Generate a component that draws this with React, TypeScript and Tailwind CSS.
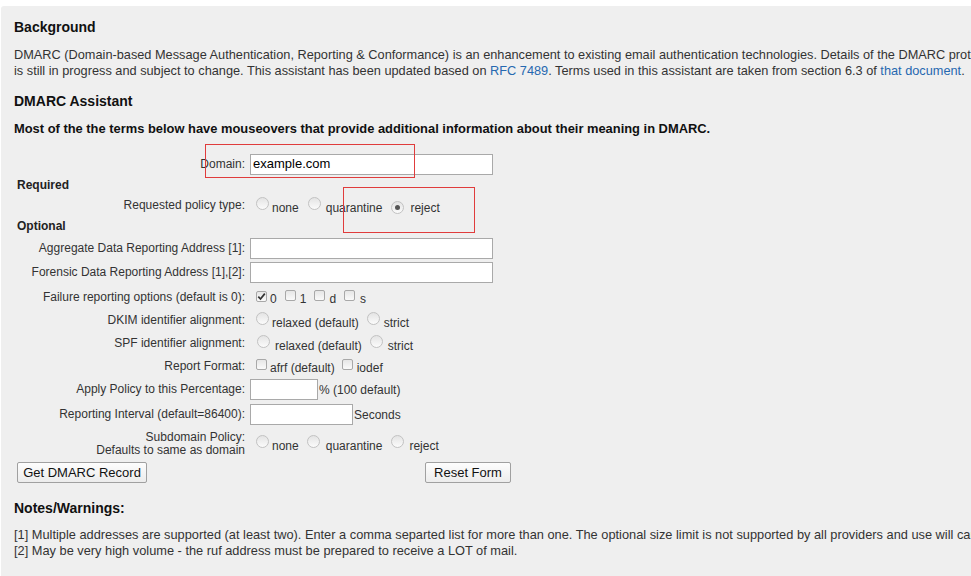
import React from 'react';

const Radio = ({ checked = false }: { checked?: boolean }) => (
  <span className="inline-flex h-[13px] w-[13px] shrink-0 items-center justify-center rounded-full border border-[#c2c2c2] bg-gradient-to-b from-[#e4e4e4] to-[#fbfbfb]">
    {checked && <span className="h-[5px] w-[5px] rounded-full bg-[#555]" />}
  </span>
);

const Check = ({ checked = false }: { checked?: boolean }) => (
  <span className="inline-flex h-[11px] w-[11px] shrink-0 items-center justify-center rounded-[2px] border border-[#a8a8a8] bg-gradient-to-b from-[#e6e6e6] to-[#fafafa]">
    {checked && (
      <svg width="9" height="9" viewBox="0 0 9 9">
        <path d="M1.3 4.6 L3.5 7 L7.8 1.6" fill="none" stroke="#333" strokeWidth="1.7" />
      </svg>
    )}
  </span>
);

const Row = ({ label, h, children }: { label: React.ReactNode; h: string; children?: React.ReactNode }) => (
  <div className={`flex items-center ${h}`}>
    <div className="w-[231px] shrink-0 text-right text-[12px] leading-[13px] text-[#333]">{label}</div>
    <div className="ml-[5px] flex items-center text-[12px] text-[#333]">{children}</div>
  </div>
);

const Opt = ({ children, cls }: { children: React.ReactNode; cls: string }) => (
  <span className={`translate-y-[2px] ${cls}`}>{children}</span>
);

export default function App() {
  return (
    <div className="h-[576px] w-[971px] overflow-hidden bg-white pl-[1px] pt-[6px] font-['Liberation_Sans',Arial,sans-serif]">
      <div className="relative h-full w-[1100px] rounded-tl-[3px] bg-[#efefef] pl-[13px] pt-[12px]">
        <h2 className="text-[14px] font-bold leading-[18px] text-[#111]">Background</h2>
        <div className="mt-[11px] whitespace-nowrap text-[12.75px] leading-[16px] text-[#333]">
          <div>
            DMARC (Domain-based Message Authentication, Reporting &amp; Conformance) is an enhancement to existing email authentication technologies. Details of the DMARC protocol
          </div>
          <div>
            is still in progress and subject to change. This assistant has been updated based on{' '}
            <a className="text-[#2668b0]">RFC 7489</a>. Terms used in this assistant are taken from section 6.3 of{' '}
            <a className="text-[#2668b0]">that document</a>.
          </div>
        </div>
        <h2 className="mt-[13px] text-[14px] font-bold leading-[18px] text-[#111]">DMARC Assistant</h2>
        <p className="mt-[11px] text-[12.9px] font-bold leading-[16px] text-[#111]">
          Most of the the terms below have mouseovers that provide additional information about their meaning in DMARC.
        </p>

        <div className="mt-[16px]">
          <Row label="Domain:" h="h-[22px]">
            <div className="flex h-[21px] w-[243px] items-center border border-[#a9a9a9] bg-white pl-[2px] text-[13px] text-black">
              example.com
            </div>
          </Row>
          <div className="flex h-[20px] items-center pl-[3px] text-[12px] font-bold text-[#222]">Required</div>
          <Row label="Requested policy type:" h="h-[21px]">
            <span className="ml-[6px]"><Radio /></span>
            <Opt cls="ml-[3px]">none</Opt>
            <span className="ml-[9px]"><Radio /></span>
            <Opt cls="ml-[5px]">quarantine</Opt>
            <span className="ml-[9px]"><Radio checked /></span>
            <Opt cls="ml-[6px]">reject</Opt>
          </Row>
          <div className="flex h-[20px] items-center pl-[3px] text-[12px] font-bold text-[#222]">Optional</div>
          <Row label="Aggregate Data Reporting Address [1]:" h="h-[24px]">
            <div className="h-[21px] w-[243px] border border-[#a9a9a9] bg-white" />
          </Row>
          <Row label="Forensic Data Reporting Address [1],[2]:" h="h-[25px]">
            <div className="h-[21px] w-[243px] border border-[#a9a9a9] bg-white" />
          </Row>
          <Row label="Failure reporting options (default is 0):" h="h-[24px]">
            <span className="ml-[6px]"><Check checked /></span>
            <Opt cls="ml-[3px]">0</Opt>
            <span className="ml-[8px]"><Check /></span>
            <Opt cls="ml-[4px]">1</Opt>
            <span className="ml-[8px]"><Check /></span>
            <Opt cls="ml-[4px]">d</Opt>
            <span className="ml-[8px]"><Check /></span>
            <Opt cls="ml-[5px]">s</Opt>
          </Row>
          <Row label="DKIM identifier alignment:" h="h-[23px]">
            <span className="ml-[6px]"><Radio /></span>
            <Opt cls="ml-[3px]">relaxed (default)</Opt>
            <span className="ml-[8px]"><Radio /></span>
            <Opt cls="ml-[4px]">strict</Opt>
          </Row>
          <Row label="SPF identifier alignment:" h="h-[23px]">
            <span className="ml-[7px]"><Radio /></span>
            <Opt cls="ml-[5px]">relaxed (default)</Opt>
            <span className="ml-[8px]"><Radio /></span>
            <Opt cls="ml-[5px]">strict</Opt>
          </Row>
          <Row label="Report Format:" h="h-[22px]">
            <span className="ml-[6px]"><Check /></span>
            <Opt cls="ml-[3px]">afrf (default)</Opt>
            <span className="ml-[7px]"><Check /></span>
            <Opt cls="ml-[4px]">iodef</Opt>
          </Row>
          <Row label="Apply Policy to this Percentage:" h="h-[25px]">
            <div className="h-[21px] w-[68px] border border-[#a9a9a9] bg-white" />
            <span className="ml-[1px]">% (100 default)</span>
          </Row>
          <Row label="Reporting Interval (default=86400):" h="h-[25px]">
            <div className="h-[21px] w-[103px] border border-[#a9a9a9] bg-white" />
            <span className="ml-[1px]">Seconds</span>
          </Row>
          <Row
            label={
              <>
                <div>Subdomain Policy:</div>
                <div>Defaults to same as domain</div>
              </>
            }
            h="h-[33px]"
          >
            <span className="ml-[6px]"><Radio /></span>
            <Opt cls="ml-[3px]">none</Opt>
            <span className="ml-[8px]"><Radio /></span>
            <Opt cls="ml-[6px]">quarantine</Opt>
            <span className="ml-[9px]"><Radio /></span>
            <Opt cls="ml-[5px]">reject</Opt>
          </Row>
          <div className="flex h-[24px] items-center pl-[3px]">
            <button className="h-[21px] w-[130px] rounded-[2px] border border-[#a0a0a0] bg-gradient-to-b from-[#fdfdfd] to-[#ececec] text-[13px] text-[#111]">
              Get DMARC Record
            </button>
            <button className="ml-[278px] h-[21px] w-[86px] rounded-[2px] border border-[#a0a0a0] bg-gradient-to-b from-[#fdfdfd] to-[#ececec] text-[13px] text-[#111]">
              Reset Form
            </button>
          </div>
        </div>

        <h2 className="mt-[15px] text-[14px] font-bold leading-[18px] text-[#111]">Notes/Warnings:</h2>
        <div className="mt-[10px] whitespace-nowrap text-[12.8px] leading-[16px] text-[#333]">
          <div>
            [1] Multiple addresses are supported (at least two). Enter a comma separted list for more than one. The optional size limit is not supported by all providers and use will cause problems.
          </div>
          <div>[2] May be very high volume - the ruf address must be prepared to receive a LOT of mail.</div>
        </div>

        {/* annotation boxes */}
        <div className="absolute left-[204px] top-[138px] h-[34px] w-[210px] border border-[#e03c3c]" />
        <div className="absolute left-[342px] top-[181px] h-[46px] w-[132px] border border-[#e03c3c]" />
      </div>
    </div>
  );
}
